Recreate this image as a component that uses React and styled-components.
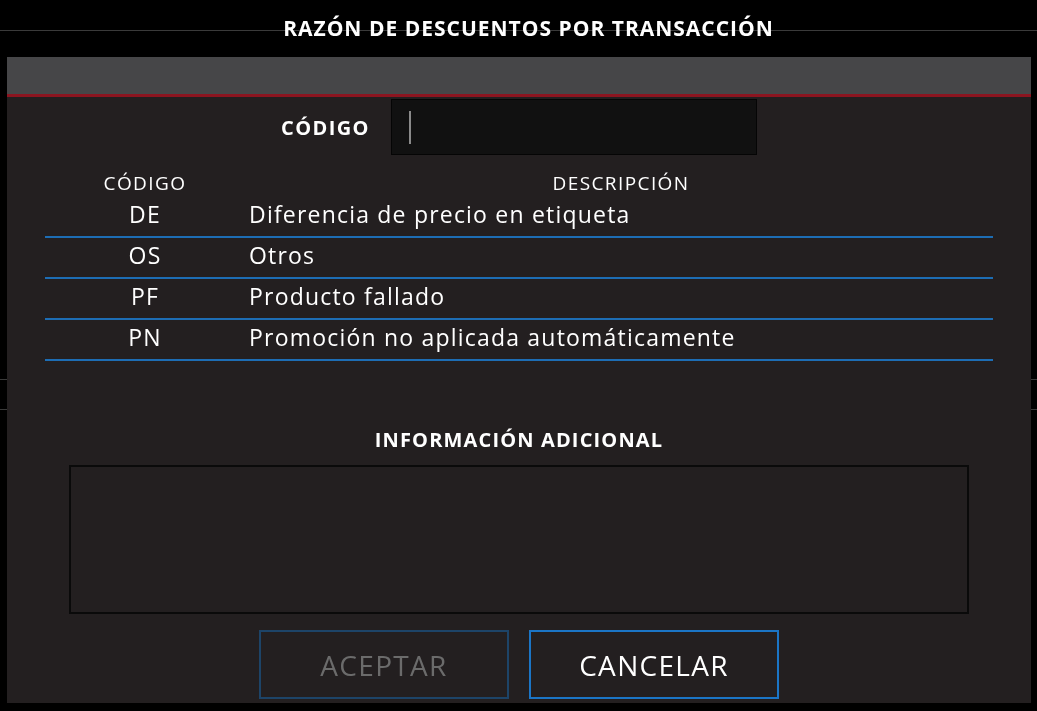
import React from 'react'
import styled, { createGlobalStyle } from 'styled-components'

const GlobalStyle = createGlobalStyle`
  html, body {
    margin: 0;
    padding: 0;
    background: #000;
    overflow: hidden;
  }
  * { box-sizing: border-box; }
`

const FONT = `"Open Sans", "DejaVu Sans", sans-serif`

const reasons = [
  { code: 'DE', text: 'Diferencia de precio en etiqueta' },
  { code: 'OS', text: 'Otros' },
  { code: 'PF', text: 'Producto fallado' },
  { code: 'PN', text: 'Promoción no aplicada automáticamente' },
]

function App() {
  return (
    <>
      <GlobalStyle />
      <Page>
        <TopBar>
          <PageTitle>PROMOCIONES</PageTitle>
        </TopBar>
        <Band />
      </Page>
      <Overlay>
        <DialogTitle>RAZÓN DE DESCUENTOS POR TRANSACCIÓN</DialogTitle>
        <Modal>
          <ModalHeader />
          <ModalBody>
            <FormRow>
              <FieldLabel>CÓDIGO</FieldLabel>
              <CodeInput>
                <Caret />
              </CodeInput>
            </FormRow>
            <Table>
              <HeadRow>
                <CodeCell>CÓDIGO</CodeCell>
                <DescHead>DESCRIPCIÓN</DescHead>
              </HeadRow>
              {reasons.map((r) => (
                <Row key={r.code}>
                  <CodeCell>{r.code}</CodeCell>
                  <DescCell>{r.text}</DescCell>
                </Row>
              ))}
            </Table>
            <SectionLabel>INFORMACIÓN ADICIONAL</SectionLabel>
            <InfoBox />
            <Buttons>
              <Button disabled>ACEPTAR</Button>
              <Button>CANCELAR</Button>
            </Buttons>
          </ModalBody>
        </Modal>
      </Overlay>
    </>
  )
}

const Page = styled.div`
  width: 100%;
  height: 711px;
  background: #000;
  display: flex;
  flex-direction: column;
`

const TopBar = styled.div`
  height: 31px;
  border-bottom: 1px solid #3a3a3a;
  display: flex;
  justify-content: flex-end;
  padding-right: 196px;
  overflow: hidden;
`

const PageTitle = styled.span`
  font-family: ${FONT};
  font-weight: 700;
  font-size: 20px;
  letter-spacing: 1px;
  color: #2c2c2c;
  margin-top: -17px;
  line-height: 20px;
`

const Band = styled.div`
  margin-top: 348px;
  height: 31px;
  border-top: 1px solid #3a3a3a;
  border-bottom: 1px solid #3a3a3a;
`

const Overlay = styled.div`
  position: fixed;
  inset: 0;
  display: flex;
  flex-direction: column;
`

const DialogTitle = styled.h1`
  margin: 0;
  height: 57px;
  padding: 14px 0 0 20px;
  text-align: center;
  font-family: ${FONT};
  font-weight: 700;
  font-size: 21px;
  letter-spacing: 1px;
  line-height: 28px;
  color: #fff;
`

const Modal = styled.div`
  flex: 1;
  margin: 0 6px 8px 7px;
  background: #231f20;
  display: flex;
  flex-direction: column;
`

const ModalHeader = styled.div`
  height: 40px;
  background: #464648;
  border-bottom: 3px solid #8c1520;
`

const ModalBody = styled.div`
  padding: 2px 38px 4px;
  display: flex;
  flex-direction: column;
  align-items: center;
`

const FormRow = styled.div`
  display: flex;
  align-items: center;
  gap: 21px;
`

const FieldLabel = styled.label`
  font-family: ${FONT};
  font-weight: 700;
  font-size: 20px;
  letter-spacing: 1.4px;
  color: #fff;
`

const CodeInput = styled.div`
  width: 366px;
  height: 56px;
  background: #111;
  border: 1px solid #050505;
  display: flex;
  align-items: center;
  padding-left: 17px;
`

const Caret = styled.span`
  width: 2px;
  height: 33px;
  background: #8a8a8a;
`

const Table = styled.div`
  width: 100%;
  margin-top: 13px;
  font-family: ${FONT};
  color: #fff;
`

const HeadRow = styled.div`
  display: grid;
  grid-template-columns: 200px 1fr;
  height: 29px;
  align-items: center;
  font-size: 19px;
  letter-spacing: 1.4px;
`

const Row = styled.div`
  display: grid;
  grid-template-columns: 200px 1fr;
  height: 41px;
  align-items: center;
  padding-bottom: 6px;
  border-bottom: 2px solid #1d6db4;
  font-size: 23px;
  letter-spacing: 1.2px;
`

const CodeCell = styled.div`
  text-align: center;
`

const DescHead = styled.div`
  text-align: center;
  padding-left: 4px;
`

const DescCell = styled.div`
  padding-left: 4px;
`

const SectionLabel = styled.h2`
  margin: 67px 0 0;
  font-family: ${FONT};
  font-weight: 700;
  font-size: 20px;
  letter-spacing: 1.15px;
  line-height: 24px;
  color: #fff;
`

const InfoBox = styled.div`
  margin-top: 13px;
  width: 900px;
  height: 149px;
  border: 2px solid #0a0a0a;
  background: #231f20;
`

const Buttons = styled.div`
  margin-top: 16px;
  display: flex;
  gap: 20px;
`

const Button = styled.button`
  width: 250px;
  height: 69px;
  background: #231f20;
  border: 2px solid ${(p) => (p.disabled ? '#1d4468' : '#1b75c6')};
  color: ${(p) => (p.disabled ? '#6b6b6b' : '#fff')};
  font-family: ${FONT};
  font-size: 28px;
  letter-spacing: 1.3px;
  cursor: ${(p) => (p.disabled ? 'default' : 'pointer')};
`

export default App
